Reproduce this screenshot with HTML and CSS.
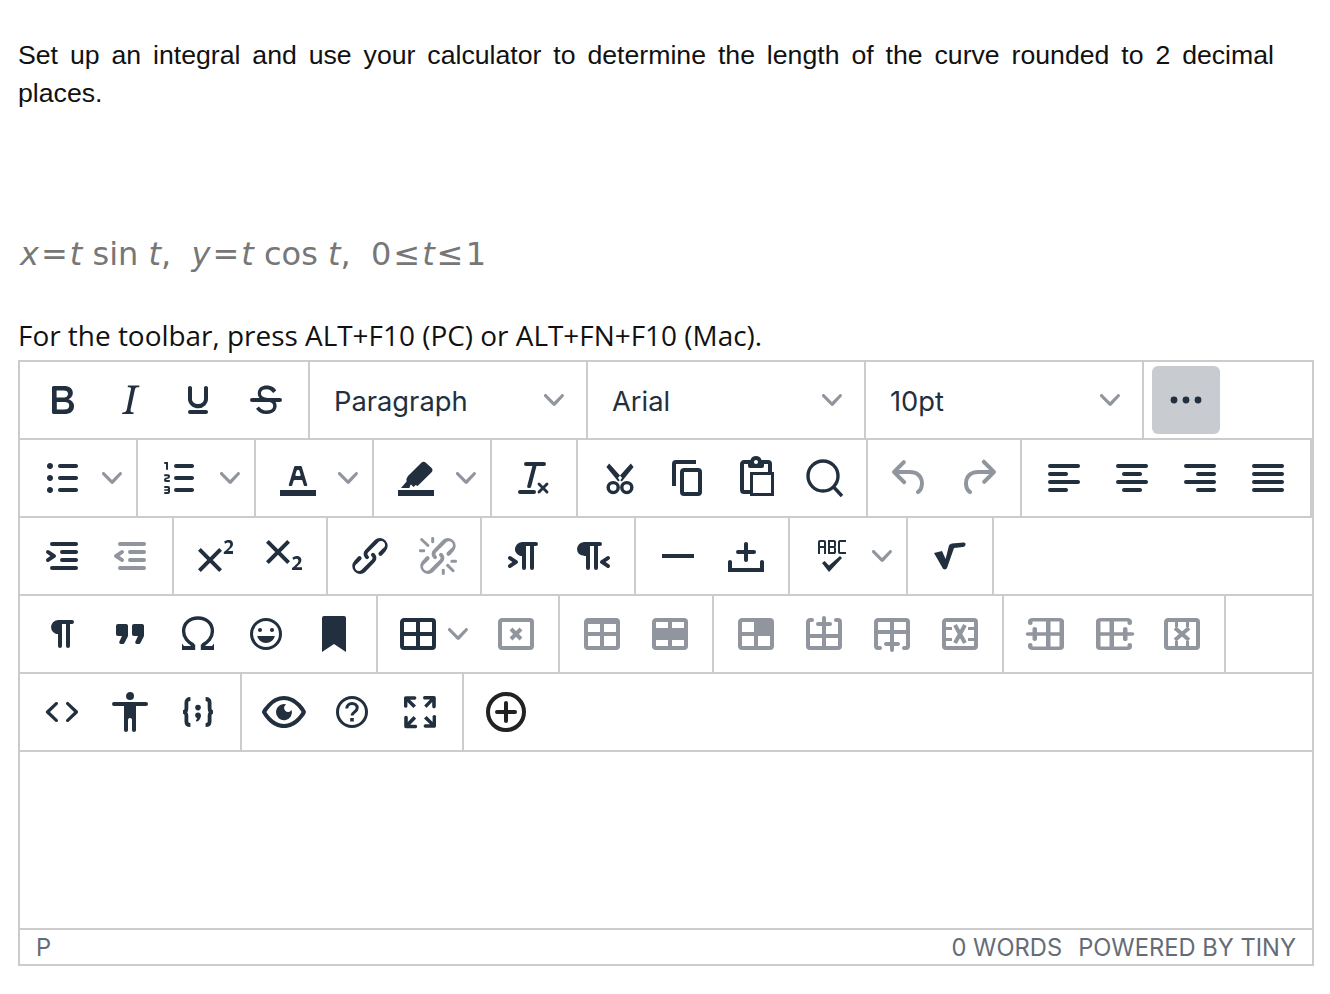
FILE: index.html
```html
<!DOCTYPE html>
<html lang="en">
<head>
<meta charset="utf-8">
<title>Question</title>
<link rel="stylesheet" href="styles.css">
</head>
<body>
<svg class="defs" aria-hidden="true"><symbol id="chev" viewBox="0 0 10 10"><path d="M8.7 2.2c.3-.3.8-.3 1 0 .4.4.4.9 0 1.2L5.7 7.8c-.3.3-.9.3-1.2 0L.2 3.4a.8.8 0 010-1.2c.3-.3.8-.3 1.1 0L5 6l3.7-3.8z"/></symbol></svg>
<main class="page">
  <p class="question">Set up an integral and use your calculator to determine the length of the curve rounded to 2 decimal places.</p>
  <p class="math"><i>x</i><span class="op">=</span><i>t</i> sin <i>t</i>, &nbsp;<i>y</i><span class="op">=</span><i>t</i> cos <i>t</i>, &nbsp;0<span class="op">≤</span><i>t</i><span class="op">≤</span>1</p>
  <p class="hint">For the toolbar, press ALT+F10 (PC) or ALT+FN+F10 (Mac).</p>
  <section class="editor">
    <div class="row">
      <div class="group">
        <button class="btn"><svg class="ic" viewBox="0 0 24 24"><path d="M7.8 19c-.3 0-.5 0-.6-.2l-.2-.5V5.7c0-.2 0-.4.2-.5l.6-.2h5c1.5 0 2.7.3 3.5 1 .7.6 1.1 1.4 1.1 2.5a3 3 0 01-.6 1.9c-.4.6-1 1-1.6 1.2.4.1.9.3 1.3.6s.8.7 1 1.2c.4.4.5 1 .5 1.6 0 1.3-.4 2.3-1.3 3-.8.7-2.1 1-3.8 1H7.8zm5-8.3c.6 0 1.2-.1 1.6-.5.4-.3.6-.7.6-1.3 0-1.1-.8-1.7-2.3-1.7H9.3v3.5h3.4zm.5 6c.7 0 1.3-.1 1.7-.4.4-.4.6-.9.6-1.5s-.2-1-.7-1.4c-.4-.3-1-.4-2-.4H9.4v3.8h4z"/></svg></button>
        <button class="btn"><svg class="ic" viewBox="0 0 24 24"><path d="M16.7 4.7l-.1.9h-.3c-.6 0-1 0-1.4.3-.3.3-.4.6-.5 1.1l-2.1 9.8v.6c0 .5.4.8 1.4.8h.2l-.2.8H8l.2-.8h.2c1.1 0 1.8-.5 2-1.5l2-9.8.1-.5c0-.6-.4-.8-1.4-.8h-.3l.2-.9h5.8z"/></svg></button>
        <button class="btn"><svg class="ic" viewBox="0 0 24 24"><path d="M16 5c.6 0 1 .4 1 1v5.5a4 4 0 01-.4 1.8l-1 1.4a5.3 5.3 0 01-5.5 1 5 5 0 01-1.6-1c-.5-.4-.8-.9-1.1-1.4a4 4 0 01-.4-1.8V6c0-.6.4-1 1-1s1 .4 1 1v5.5c0 .3 0 .6.2 1l.6.7a3.3 3.3 0 002.2.8 3.4 3.4 0 002.2-.8c.3-.2.4-.5.6-.8l.2-.9V6c0-.6.4-1 1-1zM8 17h8c.6 0 1 .4 1 1s-.4 1-1 1H8a1 1 0 010-2z"/></svg></button>
        <button class="btn"><svg class="ic" viewBox="0 0 24 24"><path d="M15.6 8.5c-.5-.7-1-1.1-1.3-1.3-.6-.4-1.3-.6-2-.6-2.7 0-2.8 1.7-2.8 2.1 0 1.6 1.8 2 3.2 2.3 4.4.9 4.6 2.8 4.6 3.9 0 1.4-.7 4.1-5 4.1A6.2 6.2 0 017 16.4l1.5-1.1c.4.6 1.6 2 3.7 2 1.6 0 2.5-.4 3-1 .3-.4.4-.9.4-1.5 0-1.6-2-2-3.1-2.2-2.7-.6-4.6-1.5-4.6-3.9 0-.3 0-2.2 1.6-3.2.7-.5 1.5-.8 2.8-.8 1.2 0 2.5.3 3.3.9.5.3 1 .8 1.5 1.6l-1.5 1.3zM5 11h14a1 1 0 010 2H5a1 1 0 010-2z"/></svg></button>
      </div>
      <div class="group"><button class="select">Paragraph<svg class="chev"><use href="#chev"/></svg></button></div>
      <div class="group"><button class="select">Arial<svg class="chev"><use href="#chev"/></svg></button></div>
      <div class="group"><button class="select">10pt<svg class="chev"><use href="#chev"/></svg></button></div>
      <div class="group last"><button class="btn active"><svg class="ic" viewBox="0 0 24 24"><path d="M6 10.300a1.700 1.700 0 100 3.400 1.700 1.700 0 000-3.400zm12 0a1.700 1.700 0 100 3.400 1.700 1.700 0 000-3.400zm-6 0a1.700 1.700 0 100 3.400 1.700 1.700 0 000-3.400z"/></svg></button></div>
    </div>

    <div class="row">
      <div class="group"><button class="btn split"><svg class="ic" viewBox="0 0 24 24"><path d="M11 5h8c.6 0 1 .4 1 1s-.4 1-1 1h-8a1 1 0 010-2zm0 6h8c.6 0 1 .4 1 1s-.4 1-1 1h-8a1 1 0 010-2zm0 6h8c.6 0 1 .4 1 1s-.4 1-1 1h-8a1 1 0 010-2zM4.500 6c0-.4.1-.8.4-1 .3-.4.7-.5 1.100-.5s.8.1 1 .4c.4.3.5.7.5 1.100s-.1.8-.4 1c-.3.4-.7.5-1.100.5s-.8-.1-1-.4c-.4-.3-.5-.7-.5-1.100zm0 6c0-.4.1-.8.4-1 .3-.4.7-.5 1.100-.5s.8.1 1 .4c.4.3.5.7.5 1.100s-.1.8-.4 1c-.3.4-.7.5-1.100.5s-.8-.1-1-.4c-.4-.3-.5-.7-.5-1.100zm0 6c0-.4.1-.8.4-1 .3-.4.7-.5 1.100-.5s.8.1 1 .4c.4.3.5.7.5 1.100s-.1.8-.4 1c-.3.4-.7.5-1.100.5s-.8-.1-1-.4c-.4-.3-.5-.7-.5-1.100z"/></svg><svg class="chev"><use href="#chev"/></svg></button></div>
      <div class="group"><button class="btn split"><svg class="ic" viewBox="0 0 24 24"><path d="M10 17h8c.6 0 1 .4 1 1s-.4 1-1 1h-8a1 1 0 010-2zm0-6h8c.6 0 1 .4 1 1s-.4 1-1 1h-8a1 1 0 010-2zm0-6h8c.6 0 1 .4 1 1s-.4 1-1 1h-8a1 1 0 110-2zM6 4v3.500c0 .3-.2.5-.5.5a.5.5 0 01-.5-.5V5h-.5a.5.5 0 010-1H6zm-1 8.800l.2.2h1.300c.3 0 .5.2.5.5s-.2.5-.5.5H4.900a1 1 0 01-.9-1V13c0-.4.3-.8.6-1l1.200-.4.2-.3a.2.2 0 00-.2-.2H4.500a.5.5 0 01-.5-.5c0-.3.2-.5.5-.5h1.600c.5 0 .9.4.9 1v.1c0 .4-.3.8-.6 1l-1.200.4-.2.3zM7 17v2c0 .6-.4 1-1 1H4.500a.5.5 0 010-1h1.200c.2 0 .3-.1.3-.3 0-.2-.1-.3-.3-.3H4.400a.4.4 0 110-.8h1.300c.2 0 .3-.1.3-.3 0-.2-.1-.3-.3-.3H4.500a.5.5 0 110-1H6c.6 0 1 .4 1 1z"/></svg><svg class="chev"><use href="#chev"/></svg></button></div>
      <div class="group"><button class="btn split"><svg class="ic" viewBox="0 0 24 24"><path d="M3 18h18v3H3z"/><path d="M8.700 16h-.8a.5.5 0 01-.5-.6l2.700-9c.1-.3.3-.4.5-.4h2.800c.2 0 .4.1.5.4l2.700 9a.5.5 0 01-.5.6h-.8a.5.5 0 01-.4-.4l-.7-2.200c0-.3-.3-.4-.5-.4h-3.400c-.2 0-.4.1-.5.4l-.7 2.200c0 .3-.2.4-.4.4zm2.600-7.600l-.6 2a.5.5 0 00.5.6h1.600a.5.5 0 00.5-.6l-.6-2c0-.3-.3-.4-.5-.4h-.4c-.2 0-.4.1-.5.4z"/></svg><svg class="chev"><use href="#chev"/></svg></button></div>
      <div class="group"><button class="btn split"><svg class="ic" viewBox="0 0 24 24"><path d="M3 18h18v3H3z"/><path d="M8 11l6.800-6.700c.6-.6 1.400-.6 2 0l3 2.700c.6.6.6 1.500 0 2.100l-7 6.900-1-.5-1 1-1.300-1.300-.3.300-.5 1.500H4.500l2.800-3.200-.1-1.300z"/></svg><svg class="chev"><use href="#chev"/></svg></button></div>
      <div class="group"><button class="btn"><svg class="ic" viewBox="0 0 24 24"><path d="M13.200 6a1 1 0 010 .2l-2.600 10a1 1 0 01-1 .8h-.2a.8.8 0 01-.8-1l2.600-10H8a1 1 0 110-2h9a1 1 0 010 2h-3.800zM5 18h7a1 1 0 010 2H5a1 1 0 010-2zm13 1.500L16.500 18 15 19.500a.7.7 0 01-1-1l1.500-1.500-1.500-1.500a.7.7 0 011-1l1.500 1.500 1.500-1.500a.7.7 0 011 1L17.500 17l1.500 1.500a.7.7 0 01-1 1z"/></svg></button></div>
      <div class="group">
        <button class="btn"><svg class="ic" viewBox="0 0 24 24"><path d="M17.400 4.800l1.400 1.700-5.900 7.200-2-1.700zM6.600 4.800L5.200 6.500l5.900 7.200 2-1.700z"/><circle class="line" cx="8.600" cy="16.800" r="2.500"/><circle class="line" cx="15.400" cy="16.800" r="2.500"/><circle class="dot" cx="12" cy="12.500" r=".5"/></svg></button>
        <button class="btn"><svg class="ic" viewBox="0 0 24 24"><path d="M16 3H6a2 2 0 00-2 2v11h2V5h10V3zm1 4a2 2 0 012 2v10a2 2 0 01-2 2h-7a2 2 0 01-2-2V9c0-1.200.9-2 2-2h7zm0 12V9h-7v10h7z"/></svg></button>
        <button class="btn"><svg class="ic" viewBox="0 0 24 24"><path d="M18 9V5h-2v1c0 .6-.4 1-1 1H9a1 1 0 01-1-1V5H6v13h3V9h9zM9 20H6a2 2 0 01-2-2V5c0-1.100.9-2 2-2h3.200A3 3 0 0112 1a3 3 0 012.800 2H18a2 2 0 012 2v4h1v12H9v-1zm1.500-9.500v9h9v-9h-9zM12 3a1 1 0 00-1 1c0 .5.4 1 1 1s1-.5 1-1-.4-1-1-1z"/></svg></button>
        <button class="btn"><svg class="ic" viewBox="0 0 24 24"><circle class="line" cx="11.500" cy="11" r="7.500"/><path class="line" d="M16.800 16.500l4.200 4.500"/></svg></button>
      </div>
      <div class="group">
        <button class="btn off"><svg class="ic" viewBox="0 0 24 24"><path d="M6.400 8H12c3.700 0 6.200 2 6.800 5.100.6 2.700-.4 5.600-2.300 6.800a1 1 0 01-1-1.800c1.100-.7 1.800-2.700 1.400-4.600-.5-2.100-2.100-3.500-4.900-3.500H6.400l3.300 3.300a1 1 0 11-1.400 1.400l-5-5a1 1 0 010-1.400l5-5a1 1 0 011.400 1.400L6.400 8z"/></svg></button>
        <button class="btn off"><svg class="ic" viewBox="0 0 24 24"><path d="M17.600 10H12c-2.800 0-4.400 1.400-4.900 3.500-.4 2 .3 3.900 1.400 4.600a1 1 0 11-1 1.800c-2-1.200-2.900-4.100-2.300-6.800.6-3 3-5.100 6.800-5.100h5.600l-3.300-3.300a1 1 0 111.400-1.400l5 5a1 1 0 010 1.400l-5 5a1 1 0 01-1.400-1.400l3.300-3.300z"/></svg></button>
      </div>
      <div class="group">
        <button class="btn"><svg class="ic" viewBox="0 0 24 24"><path d="M5 5h14c.6 0 1 .4 1 1s-.4 1-1 1H5a1 1 0 110-2zm0 4h8c.6 0 1 .4 1 1s-.4 1-1 1H5a1 1 0 110-2zm0 8h8c.6 0 1 .4 1 1s-.4 1-1 1H5a1 1 0 010-2zm0-4h14c.6 0 1 .4 1 1s-.4 1-1 1H5a1 1 0 010-2z"/></svg></button>
        <button class="btn"><svg class="ic" viewBox="0 0 24 24"><path d="M5 5h14c.6 0 1 .4 1 1s-.4 1-1 1H5a1 1 0 110-2zm3 4h8c.6 0 1 .4 1 1s-.4 1-1 1H8a1 1 0 110-2zm0 8h8c.6 0 1 .4 1 1s-.4 1-1 1H8a1 1 0 010-2zm-3-4h14c.6 0 1 .4 1 1s-.4 1-1 1H5a1 1 0 010-2z"/></svg></button>
        <button class="btn"><svg class="ic" viewBox="0 0 24 24"><path d="M5 5h14c.6 0 1 .4 1 1s-.4 1-1 1H5a1 1 0 110-2zm6 4h8c.6 0 1 .4 1 1s-.4 1-1 1h-8a1 1 0 010-2zm0 8h8c.6 0 1 .4 1 1s-.4 1-1 1h-8a1 1 0 010-2zm-6-4h14c.6 0 1 .4 1 1s-.4 1-1 1H5a1 1 0 010-2z"/></svg></button>
        <button class="btn"><svg class="ic" viewBox="0 0 24 24"><path d="M5 5h14c.6 0 1 .4 1 1s-.4 1-1 1H5a1 1 0 110-2zm0 4h14c.6 0 1 .4 1 1s-.4 1-1 1H5a1 1 0 110-2zm0 4h14c.6 0 1 .4 1 1s-.4 1-1 1H5a1 1 0 010-2zm0 4h14c.6 0 1 .4 1 1s-.4 1-1 1H5a1 1 0 010-2z"/></svg></button>
      </div>
    </div>

    <div class="row">
      <div class="group">
        <button class="btn"><svg class="ic" viewBox="0 0 24 24"><path d="M7 5h12c.6 0 1 .4 1 1s-.4 1-1 1H7a1 1 0 110-2zm5 4h7c.6 0 1 .4 1 1s-.4 1-1 1h-7a1 1 0 010-2zm0 4h7c.6 0 1 .4 1 1s-.4 1-1 1h-7a1 1 0 010-2zm-5 4h12a1 1 0 010 2H7a1 1 0 010-2zm-2.600-3.800L6.200 12l-1.800-1.200a1 1 0 011.200-1.600l3 2a1 1 0 010 1.600l-3 2a1 1 0 11-1.200-1.600z"/></svg></button>
        <button class="btn off"><svg class="ic" viewBox="0 0 24 24"><path d="M7 5h12c.6 0 1 .4 1 1s-.4 1-1 1H7a1 1 0 110-2zm5 4h7c.6 0 1 .4 1 1s-.4 1-1 1h-7a1 1 0 010-2zm0 4h7c.6 0 1 .4 1 1s-.4 1-1 1h-7a1 1 0 010-2zm-5 4h12a1 1 0 010 2H7a1 1 0 010-2zm1.600-3.800a1 1 0 01-1.200 1.600l-3-2a1 1 0 010-1.600l3-2a1 1 0 011.200 1.600L6.800 12l1.800 1.200z"/></svg></button>
      </div>
      <div class="group">
        <button class="btn"><svg class="ic" viewBox="0 0 24 24"><path d="M15 9.400L10.400 14l4.600 4.600-1.400 1.400L9 15.400 4.400 20 3 18.600 7.600 14 3 9.400 4.400 8 9 12.600 13.600 8 15 9.400zm5.900 1.600h-5v-1l1-.8 1.700-1.600c.3-.5.5-.9.5-1.300 0-.3 0-.5-.2-.7-.2-.2-.5-.3-.9-.3l-.8.2-.7.4-.4-1.200c.2-.2.5-.4 1-.5.3-.2.8-.2 1.200-.2.7 0 1.200.1 1.600.5.4.4.6.9.6 1.500s-.2 1.100-.6 1.600l-1.300 1.300-.6.6h2.500V11z"/></svg></button>
        <button class="btn"><svg class="ic" viewBox="0 0 24 24"><path d="M10.400 10l4.600 4.600-1.400 1.400L9 11.400 4.400 16 3 14.600 7.600 10 3 5.400 4.400 4 9 8.600 13.600 4 15 5.400 10.400 10zM21 19h-5v-1l1-.8 1.700-1.600c.3-.4.5-.8.5-1.200l-.2-.7c-.2-.2-.5-.3-.9-.3a2 2 0 00-.8.2l-.7.3-.4-1.100 1-.6 1.200-.2c.8 0 1.300.2 1.700.6.4.3.6.8.6 1.400s-.2 1.200-.6 1.700l-1.300 1.300-.6.6H21V19z"/></svg></button>
      </div>
      <div class="group">
        <button class="btn"><svg class="ic" viewBox="0 0 24 24"><path d="M6.200 12.300a1 1 0 011.400 1.400l-2 2a2 2 0 102.600 2.800l4.800-4.800a1 1 0 000-1.400 1 1 0 111.400-1.300 2.900 2.900 0 010 4L9.600 20a3.900 3.900 0 01-5.500-5.500l2-2.200zm11.600-.6a1 1 0 01-1.400-1.400l2-2a2 2 0 10-2.600-2.800L11 10.300a1 1 0 000 1.400A1 1 0 119.600 13a2.900 2.900 0 010-4L14.400 4a3.900 3.900 0 015.500 5.500l-2 2.200z"/></svg></button>
        <button class="btn off"><svg class="ic" viewBox="0 0 24 24"><path d="M6.200 12.300a1 1 0 011.400 1.400l-2.100 2a2 2 0 102.700 2.800l4.800-4.800a1 1 0 000-1.400 1 1 0 111.400-1.300 2.900 2.900 0 010 4L9.600 20a3.900 3.900 0 01-5.500-5.500l2-2.200zm11.600-.6a1 1 0 01-1.400-1.400l2.100-2a2 2 0 10-2.700-2.800L11 10.300a1 1 0 000 1.400A1 1 0 119.600 13a2.900 2.900 0 010-4L14.400 4a3.900 3.900 0 015.500 5.500l-2 2.200zM7.600 6.300a.8.8 0 01-1 1.100L3.300 4.200a.7.7 0 011-1l3.200 3.100zM5.100 8.600a.8.8 0 010 1.500H3a.8.8 0 010-1.500H5zm5-3.500a.8.8 0 01-1.500 0V3a.8.8 0 011.500 0v2zm6 11.800a.8.8 0 011-1l3.200 3.200a.8.8 0 01-1 1L16 17zm-2.200 2a.8.8 0 011.500 0V21a.8.8 0 01-1.500 0V19zm5-3.500a.7.7 0 110-1.500H21a.8.8 0 010 1.500H19z"/></svg></button>
      </div>
      <div class="group">
        <button class="btn"><svg class="ic" viewBox="0 0 24 24"><path d="M11 5h7a1 1 0 010 2h-1v11a1 1 0 01-2 0V7h-2v11a1 1 0 01-2 0v-6c-.5 0-1 0-1.400-.3A3.400 3.400 0 017.800 10a3.300 3.300 0 010-2.800 3.400 3.400 0 011.800-1.800L11 5zM4.400 16.200L6.200 15l-1.800-1.200a1 1 0 011.200-1.600l3 2a1 1 0 010 1.600l-3 2a1 1 0 11-1.200-1.600z"/></svg></button>
        <button class="btn"><svg class="ic" viewBox="0 0 24 24"><path d="M8 5h8a1 1 0 010 2h-1v11a1 1 0 01-2 0V7h-2v11a1 1 0 01-2 0v-6c-.5 0-1 0-1.400-.3A3.400 3.400 0 014.800 10a3.300 3.300 0 010-2.800 3.400 3.400 0 011.800-1.800L8 5zm12.600 11.200a1 1 0 01-1.200 1.600l-3-2a1 1 0 010-1.600l3-2a1 1 0 011.200 1.600L18.800 15l1.800 1.200z"/></svg></button>
      </div>
      <div class="group">
        <button class="btn"><svg class="ic" viewBox="0 0 24 24"><path d="M4 11h16v2H4z"/></svg></button>
        <button class="btn"><svg class="ic" viewBox="0 0 24 24"><path d="M11 11H8a1 1 0 110-2h3V6c0-.6.4-1 1-1s1 .4 1 1v3h3c.6 0 1 .4 1 1s-.4 1-1 1h-3v3c0 .6-.4 1-1 1a1 1 0 01-1-1v-3zm10 4v5H3v-5c0-.6.4-1 1-1s1 .4 1 1v3h14v-3c0-.6.4-1 1-1s1 .4 1 1z"/></svg></button>
      </div>
      <div class="group"><button class="btn split"><svg class="ic" viewBox="0 0 24 24"><path d="M6 8v3H5V5c0-.3.1-.5.3-.7.2-.2.4-.3.7-.3h2c.3 0 .5.1.7.3.2.2.3.4.3.7v6H8V8H6zm0-3v2h2V5H6zm13 0h-3v5h3v1h-3a1 1 0 01-.7-.3 1 1 0 01-.3-.7V5c0-.3.1-.5.3-.7.2-.2.4-.3.7-.3h3v1zm-5 1.500l-.1.7c-.1.2-.3.3-.6.3.3 0 .5.1.6.3l.1.7V10c0 .3-.1.5-.3.7a1 1 0 01-.7.3h-3V4h3c.3 0 .5.1.7.3.2.2.3.4.3.7v1.500zM13 10V8h-2v2h2zm0-3V5h-2v2h2zm3 5l1 1-6.500 7L7 15.500l1.300-1 2.200 2.200L16 12z"/></svg><svg class="chev"><use href="#chev"/></svg></button></div>
      <div class="group"><button class="btn"><svg class="ic" viewBox="0 0 24 24"><path d="M4 10.500L8 9.500l1.800 4 1.500-6c.2-1 .9-1.500 1.700-1.700l5.800-.6c.8 0 1.200.6.9 1.300-.2.7-.7.9-1.200 1L14 8l-3.500 10c-.3.900-1.800 1-2.200 0z"/></svg></button></div>
    </div>

    <div class="row">
      <div class="group">
        <button class="btn"><svg class="ic" viewBox="0 0 24 24"><path d="M10 5h7a1 1 0 010 2h-1v11a1 1 0 01-2 0V7h-2v11a1 1 0 01-2 0v-6c-.5 0-1 0-1.400-.3A3.400 3.400 0 016.800 10a3.300 3.300 0 010-2.800 3.400 3.400 0 011.800-1.800L10 5z"/></svg></button>
        <button class="btn"><svg class="ic" viewBox="0 0 24 24"><path d="M7.500 17h.9c.4 0 .7-.2.900-.6L11 13V8c0-.6-.4-1-1-1H6a1 1 0 00-1 1v4c0 .6.4 1 1 1h2l-1.300 2.700a1 1 0 00.8 1.300zm8 0h.9c.4 0 .7-.2.900-.6L19 13V8c0-.6-.4-1-1-1h-4a1 1 0 00-1 1v4c0 .6.4 1 1 1h2l-1.300 2.700a1 1 0 00.8 1.300z"/></svg></button>
        <button class="btn"><svg class="ic" viewBox="0 0 24 24"><path class="line omega" d="M9.800 17.500C7 16.400 4.800 13.700 4.800 10.600 4.800 6.500 8 4 12 4s7.200 2.500 7.200 6.600c0 3.100-2.200 5.800-5 6.900"/><path d="M4 20v-3.200l1 1.200h3.400l-.8-1.500 3 .7V20zM20 20v-3.200l-1 1.200h-3.400l.8-1.500-3 .7V20z"/></svg></button>
        <button class="btn"><svg class="ic" viewBox="0 0 24 24"><path d="M9 11c.6 0 1-.4 1-1s-.4-1-1-1a1 1 0 00-1 1c0 .6.4 1 1 1zm6 0c.6 0 1-.4 1-1s-.4-1-1-1a1 1 0 00-1 1c0 .6.4 1 1 1zm-3 5.500c2.100 0 4-1.500 4.400-3.500H7.600c.5 2 2.300 3.500 4.400 3.500zM12 4a8 8 0 100 16 8 8 0 000-16zm0 14.500a6.500 6.500 0 110-13 6.500 6.500 0 010 13z"/></svg></button>
        <button class="btn"><svg class="ic" viewBox="0 0 24 24"><path d="M6 4v17l6-4 6 4V4c0-.6-.4-1-1-1H7a1 1 0 00-1 1z"/></svg></button>
      </div>
      <div class="group">
        <button class="btn menu"><svg class="ic" viewBox="0 0 24 24"><path fill-rule="evenodd" d="M19 4a2 2 0 012 2v12a2 2 0 01-2 2H5a2 2 0 01-2-2V6c0-1.100.9-2 2-2h14zM5 13v5h6v-5H5zm14 0h-6v5h6v-5zm0-7h-6v5h6V6zM5 6v5h6V6H5z"/></svg><svg class="chev"><use href="#chev"/></svg></button>
        <button class="btn off"><svg class="ic" viewBox="0 0 24 24"><path fill-rule="evenodd" d="M5 4h14a2 2 0 012 2v12a2 2 0 01-2 2H5a2 2 0 01-2-2V6c0-1.100.9-2 2-2zm0 2v12h14V6H5z"/><path class="line x" d="M9.500 9.500l5 5M14.500 9.500l-5 5"/></svg></button>
      </div>
      <div class="group">
        <button class="btn off"><svg class="ic" viewBox="0 0 24 24"><path fill-rule="evenodd" d="M19 4a2 2 0 012 2v12a2 2 0 01-2 2H5a2 2 0 01-2-2V6c0-1.100.9-2 2-2h14zM5 7v4h6V7H5zm8 0v4h6V7h-6zM5 13v5h6v-5H5zm8 0v5h6v-5h-6z"/></svg></button>
        <button class="btn off"><svg class="ic" viewBox="0 0 24 24"><path d="M19 4a2 2 0 012 2v12a2 2 0 01-2 2H5a2 2 0 01-2-2V6c0-1.100.9-2 2-2h14zM5 15v3h6v-3H5zm14 0h-6v3h6v-3zm0-9h-6v3h6V6zM5 6v3h6V6H5z"/></svg></button>
      </div>
      <div class="group">
        <button class="btn off"><svg class="ic" viewBox="0 0 24 24"><path d="M19 4a2 2 0 012 2v12a2 2 0 01-2 2H5a2 2 0 01-2-2V6c0-1.100.9-2 2-2h14zm-8 9H5v5h6v-5zm8 0h-6v5h6v-5zm-8-7H5v5h6V6z"/></svg></button>
        <button class="btn off"><svg class="ic" viewBox="0 0 24 24"><path d="M6 4a1 1 0 110 2H5v6h6V9a1 1 0 012 0v3h6V6h-1a1 1 0 010-2h1a2 2 0 012 2v12a2 2 0 01-2 2H5a2 2 0 01-2-2V6c0-1.100.9-2 2-2h1zm5 10H5v4h6v-4zm8 0h-6v4h6v-4zM12 3c.5 0 1 .4 1 1v2h2c.6 0 1 .4 1 1s-.4 1-1 1h-2v2c0 .6-.4 1-1 1a1 1 0 01-1-1V8H9a1 1 0 010-2h2V4c0-.6.4-1 1-1z"/></svg></button>
        <button class="btn off"><svg class="ic" viewBox="0 0 24 24"><path d="M12 13c.5 0 1 .4 1 1v2h2c.6 0 1 .4 1 1s-.4 1-1 1h-2v2c0 .6-.4 1-1 1a1 1 0 01-1-1v-2H9a1 1 0 010-2h2v-2c0-.6.4-1 1-1zm6 7a1 1 0 010-2h1v-6h-6v3a1 1 0 01-2 0v-3H5v6h1a1 1 0 010 2H5a2 2 0 01-2-2V6c0-1.100.9-2 2-2h14a2 2 0 012 2v12a2 2 0 01-2 2h-1zM11 6H5v4h6V6zm8 0h-6v4h6V6z"/></svg></button>
        <button class="btn off"><svg class="ic" viewBox="0 0 24 24"><path fill-rule="evenodd" d="M5 4h14a2 2 0 012 2v12a2 2 0 01-2 2H5a2 2 0 01-2-2V6c0-1.100.9-2 2-2zm0 2v12h14V6H5z"/><path d="M5 8.500h3V10H5zM5 14h3v1.500H5zM16 8.500h3V10h-3zM16 14h3v1.500h-3z"/><path class="line x" d="M9.500 7.500l5 9M14.500 7.500l-5 9"/></svg></button>
      </div>
      <div class="group">
        <button class="btn off"><svg class="ic" viewBox="0 0 24 24"><path transform="translate(12 12) scale(1.125 .889) rotate(-90) translate(-12 -12)" d="M6 4a1 1 0 110 2H5v6h6V9a1 1 0 012 0v3h6V6h-1a1 1 0 010-2h1a2 2 0 012 2v12a2 2 0 01-2 2H5a2 2 0 01-2-2V6c0-1.100.9-2 2-2h1zm5 10H5v4h6v-4zm8 0h-6v4h6v-4zM12 3c.5 0 1 .4 1 1v2h2c.6 0 1 .4 1 1s-.4 1-1 1h-2v2c0 .6-.4 1-1 1a1 1 0 01-1-1V8H9a1 1 0 010-2h2V4c0-.6.4-1 1-1z"/></svg></button>
        <button class="btn off"><svg class="ic" viewBox="0 0 24 24"><path transform="translate(12 12) scale(1.125 .889) rotate(90) translate(-12 -12)" d="M6 4a1 1 0 110 2H5v6h6V9a1 1 0 012 0v3h6V6h-1a1 1 0 010-2h1a2 2 0 012 2v12a2 2 0 01-2 2H5a2 2 0 01-2-2V6c0-1.100.9-2 2-2h1zm5 10H5v4h6v-4zm8 0h-6v4h6v-4zM12 3c.5 0 1 .4 1 1v2h2c.6 0 1 .4 1 1s-.4 1-1 1h-2v2c0 .6-.4 1-1 1a1 1 0 01-1-1V8H9a1 1 0 010-2h2V4c0-.6.4-1 1-1z"/></svg></button>
        <button class="btn off"><svg class="ic" viewBox="0 0 24 24"><path fill-rule="evenodd" d="M5 4h14a2 2 0 012 2v12a2 2 0 01-2 2H5a2 2 0 01-2-2V6c0-1.100.9-2 2-2zm0 2v12h14V6H5z"/><path d="M8.500 6H10v2.500H8.500zM14 6h1.500v2.500H14zM8.500 15.500H10V18H8.500zM14 15.500h1.500V18H14z"/><path class="line x" d="M8.500 9l7 6M15.500 9l-7 6"/></svg></button>
      </div>
    </div>

    <div class="row">
      <div class="group">
        <button class="btn"><svg class="ic" viewBox="0 0 24 24"><path d="M9.800 15.700c.3.3.3.8 0 1-.3.4-.9.4-1.200 0l-4.400-4.100a.8.8 0 010-1.200l4.400-4.200c.3-.3.9-.3 1.200 0 .3.3.3.8 0 1.100L6 12l3.800 3.700zM14.200 15.700c-.3.3-.3.8 0 1 .4.4.9.4 1.200 0l4.400-4.100c.3-.3.3-.9 0-1.200l-4.400-4.200a.8.8 0 00-1.200 0c-.3.3-.3.8 0 1.100L18 12l-3.800 3.700z"/></svg></button>
        <button class="btn"><svg class="ic" viewBox="0 0 24 24"><path d="M12 2a2 2 0 012 2 2 2 0 01-2 2 2 2 0 01-2-2c0-1.100.9-2 2-2zm8 7h-5v12c0 .6-.4 1-1 1a1 1 0 01-1-1v-5c0-.6-.4-1-1-1a1 1 0 00-1 1v5c0 .6-.4 1-1 1a1 1 0 01-1-1V9H4a1 1 0 110-2h16c.6 0 1 .4 1 1s-.4 1-1 1z"/></svg></button>
        <button class="btn"><svg class="ic" viewBox="0 0 24 24"><path class="line brace" d="M8.200 5.500C6.900 5.500 6.200 6.100 6.200 7.300v2.900c0 1-.5 1.600-1.500 1.800 1 .2 1.500.8 1.500 1.800v2.900c0 1.200.7 1.800 2 1.800M15.800 5.500c1.300 0 2 .6 2 1.800v2.900c0 1 .5 1.600 1.500 1.800-1 .2-1.500.8-1.500 1.800v2.900c0 1.200-.7 1.800-2 1.800"/><circle cx="12" cy="9.800" r="1.400"/><circle cx="12" cy="13.600" r="1.400"/><path d="M11.200 13.200l2.200.4c0 1.500-.7 2.700-2 3.300l-.5-.6c.5-.5.7-1.100.7-1.700z"/></svg></button>
      </div>
      <div class="group">
        <button class="btn"><svg class="ic" viewBox="0 0 24 24"><path d="M3.500 12.500c.5.8 1.100 1.600 1.800 2.300 2 2 4.200 3.200 6.700 3.200s4.700-1.200 6.700-3.200a16.200 16.200 0 002.100-2.800 15.700 15.700 0 00-2.100-2.800c-2-2-4.200-3.200-6.700-3.200a9.300 9.300 0 00-6.700 3.200A16.200 16.200 0 003.200 12c0 .2.2.3.3.5zm-2.400-1l.7-1.200L4 7.800C6.200 5.400 8.900 4 12 4c3 0 5.800 1.400 8.100 3.800a18.200 18.200 0 012.800 3.700v1l-.7 1.200-2.100 2.500c-2.300 2.400-5 3.800-8.100 3.800-3 0-5.800-1.400-8.100-3.800a18.200 18.200 0 01-2.800-3.700 1 1 0 010-1zm12-3.300a2 2 0 102.700 2.700A4 4 0 118 12a4 4 0 015.100-3.800z"/></svg></button>
        <button class="btn"><svg class="ic" viewBox="0 0 24 24"><path d="M12 5.500a6.500 6.500 0 00-6.500 6.500 6.500 6.500 0 0013 0A6.500 6.500 0 0012 5.500zm0-1.500a8 8 0 110 16 8 8 0 010-16zm-.9 11h1.800v1.700h-1.800z"/><path class="line q" d="M9.400 10.200c0-1.500 1.200-2.500 2.600-2.500s2.600 1 2.600 2.300c0 2-2.600 1.900-2.600 3.800"/></svg></button>
        <button class="btn"><svg class="ic" viewBox="0 0 24 24"><path d="M15.300 10l-1.200-1.300 2.900-3h-2.300a.9.9 0 110-1.700H19c.5 0 .9.4.9.9v4.400a.9.9 0 11-1.800 0V7l-2.900 3zm0 4l3 3v-2.300a.9.9 0 111.700 0V19c0 .5-.4.9-.9.9h-4.400a.9.9 0 110-1.800H17l-3-2.900 1.300-1.200zM10 15.400l-2.900 3h2.300a.9.9 0 110 1.700H5a.9.9 0 01-.9-.9v-4.400a.9.9 0 111.800 0V17l2.900-3 1.200 1.300zM8.700 10L5.700 7v2.300a.9.9 0 01-1.700 0V5c0-.5.4-.9.9-.9h4.400a.9.9 0 010 1.800H7l3 2.900-1.300 1.200z"/></svg></button>
      </div>
      <div class="group last">
        <button class="btn"><svg class="ic" viewBox="0 0 24 24"><circle class="line ring" cx="12" cy="12" r="9"/><path class="line ring" d="M12 7.500v9M7.500 12h9"/></svg></button>
      </div>
    </div>

    <div class="area"></div>
    <footer class="status">
      <span>P</span>
      <span class="meta"><span>0 WORDS</span><span>POWERED BY TINY</span></span>
    </footer>
  </section>
</main>
</body>
</html>
```
FILE: styles.css
```css
* { box-sizing: border-box; }
html, body { margin: 0; background: #fff; }
.defs { display: none; }
.page { padding: 36px 16px 0 18px; width: 1330px; }
.question {
  margin: 0;
  width: 1256px;
  font: 26.67px/38px "Liberation Sans", Arial, sans-serif;
  color: #111;
  text-align: justify;
}
.math {
  margin: 122px 0 0 2px;
  height: 40px;
  font: 32px/40px "DejaVu Sans", sans-serif;
  color: #777;
  white-space: nowrap;
}
.math i { font-style: italic; }
.math .op { margin: 0 2px; }
.hint {
  margin: 42px 0 0;
  height: 44px;
  font: 27.93px/38px "Open Sans", sans-serif;
  color: #111;
}
.editor {
  display: flex;
  flex-direction: column;
  width: 1296px;
  height: 606px;
  border: 2px solid #ccc;
  color: #222f3e;
}
.row {
  display: flex;
  height: 78px;
  border-bottom: 2px solid #ccc;
}
.group {
  display: flex;
  align-items: center;
  padding: 0 8px;
  border-right: 2px solid #ccc;
}
.group.last { border-right: 0; }
.btn, .select {
  display: flex;
  align-items: center;
  height: 68px;
  margin: 0;
  padding: 0;
  border: 0;
  border-radius: 6px;
  background: none;
  color: inherit;
}
.btn { justify-content: center; width: 68px; flex: none; }
.btn.split { width: 100px; justify-content: flex-start; padding-left: 10px; }
.btn.menu { width: 96px; justify-content: flex-start; padding-left: 8px; }
.btn.active { background: #c8cbcf; }
.btn.off { color: #91969e; }
.ic { width: 48px; height: 48px; flex: none; fill: currentColor; }
.chev { width: 20px; height: 20px; flex: none; fill: #91969e; }
.btn.split .chev { margin-left: 16px; }
.btn.menu .chev { margin-left: 6px; }
.select {
  width: 260px;
  padding: 4px 14px 0 16px;
  justify-content: space-between;
  font: 27.3px/40px Inter, "Noto Sans", sans-serif;
}
.select .chev { margin-top: -4px; }
.line {
  fill: none;
  stroke: currentColor;
  stroke-width: 1.7;
}
.dot { fill: #fff; }
.line.omega { stroke-width: 1.7; }
.line.x { stroke-width: 2; }
.line.brace { stroke-width: 1.9; }
.line.q { stroke-width: 1.5; }
.line.ring { stroke-width: 2; color: #222; stroke-linecap: round; }
.area { flex: 1; }
.status {
  display: flex;
  align-items: center;
  justify-content: space-between;
  height: 36px;
  padding: 2px 16px 0;
  border-top: 2px solid #ccc;
  font: 23.7px/34px Inter, "Noto Sans", sans-serif;
  color: #646c77;
}
.meta { display: flex; gap: 16px; }
```
